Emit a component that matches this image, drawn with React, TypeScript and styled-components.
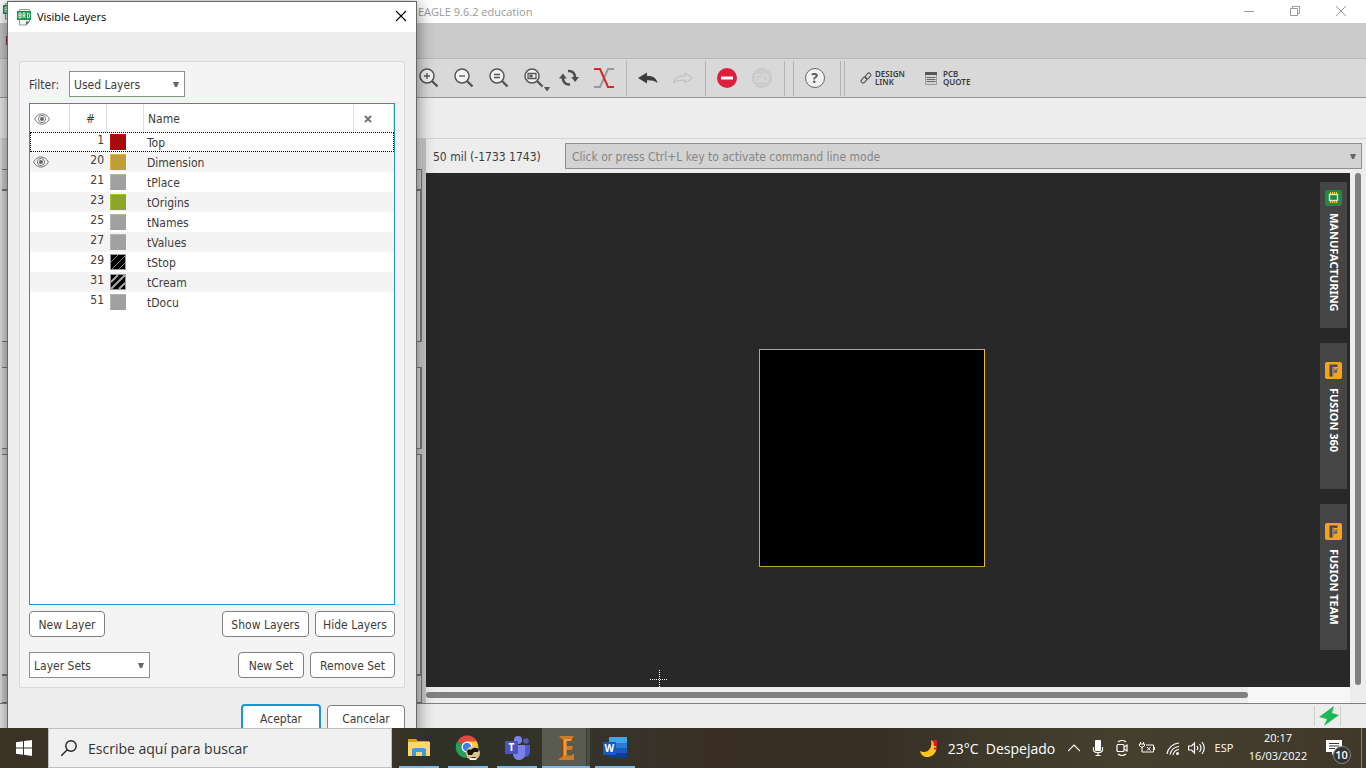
import React from 'react';
import styled, { createGlobalStyle, css } from 'styled-components';

const uiFont = '"DejaVu Sans Condensed", "DejaVu Sans", sans-serif';
const labelFont = '"Noto Sans", "Open Sans", sans-serif';
const shellFont = '"Open Sans", "Noto Sans", sans-serif';

const GlobalStyle = createGlobalStyle`
  *, *::before, *::after { box-sizing: border-box; }
  body { margin: 0; background: #ededed; }
  button, input, select { font: inherit; color: inherit; margin: 0; }
  svg { display: block; flex: none; }
`;

/* ---------- Desktop ---------- */

const Desktop = styled.div`
  display: flex;
  flex-direction: column;
  height: 100vh;
  overflow: hidden;
  font: 12px/16px ${uiFont};
  color: #3c3c3c;
`;

const Workspace = styled.main`
  position: relative;
  flex: 1;
  min-height: 0;
  display: flex;
  flex-direction: column;
  overflow: hidden;
`;

/* ---------- Main window ---------- */

const TitleBar = styled.header`
  display: flex;
  align-items: center;
  height: 23px;
  padding: 0 2px 0 3px;
  background: #fff;
  color: #999;
  font-family: ${shellFont};
`;

const WindowTitle = styled.span`
  flex: 1;
  margin-left: 401px;
  font-size: 11px;
`;

const CaptionButton = styled.button`
  display: flex;
  align-items: center;
  justify-content: center;
  width: 46px;
  height: 22px;
  padding: 0 0 2px;
  border: 0;
  background: none;
`;

const MenuBar = styled.nav`
  display: flex;
  align-items: center;
  height: 36px;
  padding-left: 5px;
  background: #cbcbcb;
  border-bottom: 1px solid #b9b9b9;
`;

const MenuItem = styled.button`
  padding: 0;
  border: 0;
  background: none;
  color: #7a2020;
`;

const Toolbar = styled.div`
  display: flex;
  align-items: center;
  height: 39px;
  padding-left: 411px;
  background: #d9d9d9;
  border-bottom: 1px solid #999;
`;

const ToolButton = styled.button`
  display: flex;
  align-items: center;
  justify-content: center;
  width: 35px;
  height: 36px;
  padding: 0;
  border: 0;
  background: none;
`;

const ToolDivider = styled.span<{ $before?: number; $after?: number }>`
  width: 1px;
  height: 35px;
  margin: 0 ${p => p.$after ?? 4}px 0 ${p => p.$before ?? 5}px;
  background: #b3b3b3;
`;

const ToolLink = styled.a<{ $gap: number }>`
  display: flex;
  align-items: center;
  gap: ${p => p.$gap}px;
  margin-left: 15px;
  width: 50px;
  color: #3a3a3a;
  font: 600 8px/8px ${labelFont};
  text-decoration: none;
  white-space: nowrap;
`;

const ParameterBar = styled.div`
  height: 41px;
  background: #ededed;
  border-bottom: 1px solid #d3d3d3;
`;

const Body = styled.div`
  flex: 1;
  min-height: 0;
  display: flex;
`;

const Dock = styled.aside`
  flex: none;
  display: flex;
  flex-direction: column;
  width: 426px;
  padding-top: 30px;
  background: #d6d6d6;
  border-left: 2px solid #e2e2e2;
  border-right: 4px solid #c8c8c8;
`;

const DockHeader = styled.div<{ $h: number; $framed?: boolean }>`
  flex: none;
  height: ${p => p.$h}px;
  background: #d2d0ce;
  ${p => p.$framed && css`border: 1px solid #777; border-left: 0;`}
`;

const DockList = styled.div<{ $h?: number }>`
  ${p => (p.$h ? css`flex: none; height: ${p.$h}px;` : css`flex: 1;`)}
  background: #dcdedc;
  border: 1px solid #777c84;
  border-width: 1px 2px 1px 0;
`;

const Editor = styled.section`
  flex: 1;
  min-width: 0;
  display: flex;
  flex-direction: column;
`;

const CommandRow = styled.div`
  display: flex;
  align-items: center;
  height: 34px;
  padding: 0 4px 0 7px;
  background: #ededed;
`;

const Coordinates = styled.output`
  width: 132px;
  padding-top: 2px;
  white-space: nowrap;
`;

const ComboFrame = styled.div<{ $w?: number; $disabled?: boolean }>`
  display: flex;
  align-items: center;
  height: 26px;
  ${p => (p.$w ? css`width: ${p.$w}px;` : css`flex: 1;`)}
  padding-right: 5px;
  background: ${p => (p.$disabled ? '#d3d3d3' : '#fff')};
  border: 1px solid #8f8f8f;
  color: ${p => (p.$disabled ? '#858585' : 'inherit')};
`;

const comboText = css`
  flex: 1;
  min-width: 0;
  height: 24px;
  padding: 2px 4px 0;
  border: 0;
  outline: 0;
  background: transparent;
  appearance: none;
`;

const ComboSelect = styled.select`${comboText}`;

const ComboInput = styled.input`
  ${comboText}
  padding-left: 6px;
  &::placeholder { color: #858585; opacity: 1; }
`;

const CanvasRow = styled.div`
  flex: 1;
  min-height: 0;
  display: flex;
`;

const Canvas = styled.div`
  position: relative;
  flex: 1;
  display: flex;
  justify-content: flex-end;
  padding: 9px 3px;
  background: #282828;
`;

const Board = styled.div`
  position: absolute;
  left: 333px;
  top: 176px;
  width: 226px;
  height: 218px;
  background: #000;
  border: 1px solid #a6a6a6;
  border-right-color: #e0c322;
  border-bottom-color: #c3a02c;
`;

const Crosshair = styled.svg`
  position: absolute;
  left: 224px;
  top: 497px;
`;

const SideTabs = styled.nav`
  display: flex;
  flex-direction: column;
  gap: 15px;
`;

const SideTab = styled.button<{ $top: number; $gap: number }>`
  display: flex;
  flex-direction: column;
  align-items: center;
  gap: ${p => p.$gap}px;
  width: 27px;
  height: 146px;
  padding: ${p => p.$top}px 0 0;
  border: 0;
  background: #454545;
  color: #fff;
  font: 700 11px/16px ${labelFont};
`;

const SideLabel = styled.span`
  writing-mode: vertical-rl;
  white-space: nowrap;
`;

const VerticalScroll = styled.div`
  width: 16px;
  padding: 0 5px 2px;
  background: #ededed;
`;

const HorizontalScroll = styled.div`
  display: flex;
  align-items: center;
  height: 16px;
  padding-right: 16px;
  background: #ededed;
`;

const ScrollThumb = styled.div<{ $vertical?: boolean }>`
  background: #808080;
  border-radius: 3px;
  ${p => (p.$vertical ? css`height: 100%;` : css`flex: 1; height: 6px;`)}
`;

const ScrollTrack = styled.div`
  width: 102px;
  height: 16px;
  background: #f6f6f6;
`;

const StatusBar = styled.footer`
  display: flex;
  justify-content: flex-end;
  align-items: center;
  height: 25px;
  padding-right: 25px;
  background: #ededed;
  border-top: 1px solid #808080;
`;

const StatusCell = styled.div`
  display: flex;
  padding: 0 1px 0 4px;
  border: solid #d0d0d0;
  border-width: 0 1px;
`;

/* ---------- Dialog ---------- */

const Dialog = styled.section`
  position: absolute;
  left: 7px;
  top: 1px;
  bottom: -16px;
  width: 410px;
  display: flex;
  flex-direction: column;
  background: #ededed;
  border: 1px solid #666;
  box-shadow: 0 2px 16px rgba(0, 0, 0, 0.5);
`;

const DialogTitle = styled.header`
  display: flex;
  align-items: center;
  height: 30px;
  padding: 0 9px 0 9px;
  background: #fff;
  color: #000;
  font: 11px/16px ${shellFont};
  h1 { flex: 1; margin: 0 0 0 6px; font: inherit; }
`;

const CloseButton = styled.button`
  padding: 0 0 2px;
  border: 0;
  background: none;
`;

const Group = styled.div`
  flex: 1;
  min-height: 0;
  display: flex;
  flex-direction: column;
  margin: 29px 11px 16px;
  padding: 9px;
  background: #f4f4f4;
  border: 1px solid #d8d8d8;
  border-radius: 2px;
`;

const Row = styled.div<{ $mt?: number }>`
  display: flex;
  align-items: center;
  gap: 6px;
  margin-top: ${p => p.$mt ?? 0}px;
`;

const FilterLabel = styled.label`
  width: 34px;
  padding-top: 2px;
`;

const Spacer = styled.span`
  flex: 1;
`;

const ListFrame = styled.div`
  flex: 1;
  min-height: 0;
  margin-top: 6px;
  background: #fff;
  border: 1px solid #1a96d2;
`;

const LayerTable = styled.table`
  width: 100%;
  table-layout: fixed;
  border-collapse: separate;
  border-spacing: 0;
`;

const HeadCell = styled.th<{ $w?: number; $indent?: number }>`
  ${p => p.$w && css`width: ${p.$w}px;`}
  height: 28px;
  padding: 1px 0 0 ${p => p.$indent ?? 4}px;
  border-right: 1px solid #dedede;
  font-weight: 400;
  text-align: left;
`;

const LayerRow = styled.tr<{ $focused?: boolean }>`
  &:nth-child(even) { background: #f4f4f4; }
  ${p => p.$focused && css`outline: 1px dotted #000; outline-offset: -1px;`}
`;

const Cell = styled.td`
  height: 20px;
  padding: 0 3px;
`;

const NameCell = styled(Cell)`
  padding-top: 2px;
`;

const NumberCell = styled(Cell)`
  padding: 0 3px 4px 0;
  text-align: right;
`;

const PushButton = styled.button<{ $w: number; $primary?: boolean }>`
  width: ${p => p.$w}px;
  height: ${p => (p.$primary ? 28 : 26)}px;
  padding: 2px 0 0;
  background: #fff;
  border: ${p => (p.$primary ? '2px solid #1a96d2' : '1px solid #808080')};
  border-radius: 4px;
  white-space: nowrap;
`;

const DialogFooter = styled.footer`
  display: flex;
  justify-content: flex-end;
  align-items: center;
  gap: 6px;
  height: 28px;
  margin: 0 11px 11px;
`;

/* ---------- Taskbar ---------- */

const Taskbar = styled.footer`
  flex: none;
  display: flex;
  height: 40px;
  background: linear-gradient(90deg, #3a3224 0, #3a3527 28%, #2f3126 32%, #36342a 45%, #3b2f24 52%, #382f24 64%, #3c392b 72%, #453f2e 82%, #40392b 100%);
  color: #fff;
  font: 11px/18px ${shellFont};
`;

const StartButton = styled.button`
  display: flex;
  align-items: center;
  justify-content: center;
  width: 48px;
  padding: 0;
  border: 0;
  background: none;
`;

const SearchBox = styled.label`
  display: flex;
  align-items: center;
  gap: 11px;
  width: 344px;
  padding-left: 12px;
  background: #f0f0f0;
  border: 1px solid #bdbdbd;
  color: #333;
  font-size: 14px;
  input { flex: 1; min-width: 0; padding: 1px 0 0; border: 0; outline: 0; background: none; }
  input::placeholder { color: #333; opacity: 1; }
`;

const Apps = styled.div`
  display: flex;
  gap: 1px;
  padding-left: 3px;
`;

const AppButton = styled.button<{ $active?: boolean }>`
  display: flex;
  align-items: center;
  justify-content: center;
  width: 48px;
  padding: 0;
  border: 0;
  background: linear-gradient(#76b9ed, #76b9ed) center bottom / 40px 2px no-repeat;
  ${p => p.$active && css`
    background:
      linear-gradient(#76b9ed, #76b9ed) center bottom / 100% 2px no-repeat,
      linear-gradient(90deg, #595a50 44px, #3a3b32 44px, #3a3b32 45px, #4b4c43 45px);
  `}
`;

const Tray = styled.div`
  flex: 1;
  display: flex;
  justify-content: flex-end;
  align-items: center;
`;

const TrayButton = styled.button<{ $w: number }>`
  display: flex;
  align-items: center;
  justify-content: center;
  width: ${p => p.$w}px;
  height: 40px;
  padding: 0;
  border: 0;
  background: none;
  white-space: nowrap;
`;

const WeatherButton = styled(TrayButton)`
  gap: 9px;
  padding: 2px 4px 0 0;
  font-size: 14px;
`;

const Clock = styled.time`
  width: 76px;
  padding-bottom: 2px;
  text-align: center;
`;

const ShowDesktop = styled.button`
  width: 5px;
  padding: 0;
  align-self: stretch;
  border: 0;
  border-left: 1px solid #86826f;
  background: none;
`;

/* ---------- Icons ---------- */

const BoardIcon = () => (
  <svg width="14" height="17" viewBox="0 0 14 17">
    <path d="M2.500 .5h10v12l-3.500 3.500h-6.500z" fill="#f4f4f4" stroke="#999" />
    <path d="M9 12.500h4L9 16.500z" fill="#666" />
    <rect x="0" y="2" width="14" height="9" fill="#1f9149" />
    <path d="M2 4v5h2v-5zM2 6.500h2M6 9V4h2v2.500H6M7 6.500l1.500 2.500M10.500 4v5h1l1-1V5l-1-1z" fill="none" stroke="#d8f3df" />
  </svg>
);

const Triangle = () => (
  <svg width="6" height="5" viewBox="0 0 6 5"><path d="M0 0h6L4 5H2z" fill="#666" /></svg>
);

const Magnifier = ({ children, menu }: { children?: React.ReactNode; menu?: boolean }) => (
  <svg width="20" height="20" viewBox="0 0 20 20" fill="none" stroke="#555" overflow="visible">
    <path d="M13 13l5.500 5.500" strokeWidth="2.400" />
    <circle cx="8" cy="8" r="7" fill="#f2f2f2" strokeWidth="1.500" />
    {children}
    {menu && <path d="M20 19h6l-2.500 4h-1z" fill="#555" stroke="none" />}
  </svg>
);

const RefreshIcon = () => (
  <svg width="20" height="20" viewBox="0 0 20 20">
    <g fill="none" stroke="#4d4d4d" strokeWidth="2.600">
      <path d="M9 3c4.500-.5 7.200 2.500 7.200 7" />
      <path d="M11 16.500c-4.500.5-7.200-2.500-7.200-7" />
    </g>
    <path d="M12.200 9h7.800l-3.900 5zM0 10.500h7.800L3.900 5.500z" fill="#4d4d4d" />
  </svg>
);

const RatsnestIcon = () => (
  <svg width="20" height="20" viewBox="0 0 20 20" fill="none" strokeWidth="2">
    <path d="M0 19h6L14 1h6" stroke="#999" />
    <path d="M0 1h6l8 18h6" stroke="#d9252a" />
  </svg>
);

const UndoIcon = () => (
  <svg width="20" height="20" viewBox="0 0 20 20">
    <path d="M0 10l9-5.500V8C14 7.800 18.500 9.500 19.500 15c-3-2.500-6.500-3-10.500-2.800V15.500z" fill="#3d3d3d" />
  </svg>
);

const RedoIcon = () => (
  <svg width="20" height="20" viewBox="0 0 20 20">
    <path d="M19.500 10L12 5v3C6 7.800 1.500 9.500.5 15c3-2.500 6.500-3 11.500-2.800V15z" fill="none" stroke="#bcbcbc" />
  </svg>
);

const StopIcon = () => (
  <svg width="20" height="20" viewBox="0 0 20 20">
    <circle cx="10" cy="10" r="10" fill="#dd1f3d" /><rect x="4" y="8.500" width="12" height="3" fill="#fff" />
  </svg>
);

const GoBadge = styled.span`
  width: 20px;
  height: 20px;
  border: 1px solid #c6c6c6;
  border-radius: 50%;
  background: #cdcdcd;
  color: #dfdfdf;
  font: 10px/18px ${labelFont};
`;

const HelpBadge = styled.span`
  width: 20px;
  height: 20px;
  border: 1px solid #666;
  border-radius: 50%;
  background: #f2f2f2;
  color: #5a5a5a;
  font: 700 14px/18px ${labelFont};
`;

const ChainIcon = () => (
  <svg width="12" height="12" viewBox="0 0 12 12" fill="none" stroke="#555" strokeWidth="1.100">
    <rect x="-3.300" y="-1.900" width="6.600" height="3.800" rx="1.900" transform="translate(4 8) rotate(-48)" />
    <rect x="-3.300" y="-1.900" width="6.600" height="3.800" rx="1.900" transform="translate(8 4) rotate(-48)" />
  </svg>
);

const QuoteIcon = () => (
  <svg width="12" height="13" viewBox="0 0 12 13">
    <path d="M.5 .5h11v12H.5z" fill="#d4d4d4" stroke="#999" /><path d="M0 0h12v3H0z" fill="#555" />
    <path d="M1.500 5.500h9M1.500 7.500h9M1.500 9.500h9" stroke="#666" />
  </svg>
);

const EyeIcon = () => (
  <svg width="16" height="12" viewBox="0 0 16 12" fill="none" stroke="#777">
    <path d="M.6 6C4-.8 12-.8 15.400 6 12 12.800 4 12.800.6 6z" />
    <circle cx="8" cy="6" r="3.600" /><circle cx="8" cy="6" r="2" fill="#666" stroke="none" />
  </svg>
);

const CrossIcon = () => (
  <svg width="8" height="8" viewBox="0 0 8 8"><path d="M1 1l6 6M7 1L1 7" stroke="#777" strokeWidth="2" /></svg>
);

const Swatch = ({ fill, edge, hatch }: { fill: string; edge: string; hatch?: number }) => (
  <svg width="16" height="16" viewBox="0 0 16 16">
    <rect width="16" height="16" fill={edge} />
    <rect x="1" y="1" width={hatch ? 14 : 15} height={hatch ? 14 : 15} fill={fill} />
    {hatch === 1 && <path d="M1 8l7-7M2 15L15 2M9 15l6-6" stroke="#aaa" strokeWidth=".8" />}
    {hatch === 2 && <path d="M1 8l7-7M1 15L15 1M9 15l6-6" stroke="#aaa" strokeWidth="2" />}
  </svg>
);

const ChipIcon = () => (
  <svg width="17" height="16" viewBox="0 0 17 16">
    <rect width="17" height="16" rx="2" fill="#1f8a43" />
    <path d="M5.500 2v11M7.500 2v11M9.500 2v11M11.500 2v11" stroke="#f1d21c" />
    <rect x="4.500" y="4.500" width="8" height="6" fill="#1f8a43" stroke="#d8e8d0" strokeWidth="1.400" />
  </svg>
);

const FusionIcon = () => (
  <svg width="17" height="17" viewBox="0 0 17 17">
    <rect width="17" height="17" rx="2" fill="#f5a21c" />
    <path d="M4.500 2.500h8v2.500H8v3h4v2.500H8v4H4.500z" fill="#4a4640" />
    <path d="M7 5v9l2-2V9.500l4-1V6L9 7V4z" fill="#85807a" />
  </svg>
);

const BoltIcon = () => (
  <svg width="20" height="20" viewBox="0 0 20 20"><path d="M15 0L0 11l8 2-3 7 15-11-7-2z" fill="#1db954" /></svg>
);

const FolderIcon = () => (
  <svg width="22" height="20" viewBox="0 0 22 20">
    <path d="M0 1h8l2 2h11v4H0z" fill="#e0a012" /><path d="M0 4h22v14H0z" fill="#fdd767" />
    <path d="M4 18v-7l2-1h10l2 1v7h-4v-4H8v4z" fill="#3f9ae0" />
  </svg>
);

const ChromeIcon = () => (
  <svg width="26" height="26" viewBox="0 0 26 26">
    <path d="M12 12L2.500 6.500A11 11 0 0 1 22 6.500z" fill="#e14b3d" />
    <path d="M12 12L2.200 6.500A11 11 0 0 0 11 23l5-9z" fill="#23a05a" />
    <path d="M12 12V6.500h9.800A11 11 0 0 1 11.500 23l5-9z" fill="#f8c92d" />
    <circle cx="12" cy="12" r="5.500" fill="#fff" /><circle cx="12" cy="12" r="4.300" fill="#3f7ee8" />
    <circle cx="18" cy="18" r="7" fill="#d9c391" />
    <path d="M12 16c2-3 3 0 5-2s4-1 7 0l-1 3h-4l-2 3h-4zM14 22h8l-3 1z" fill="#1a1510" />
    <path d="M13.500 23.500h9l-2 1.500h-5z" fill="#fff" />
  </svg>
);

const IconLetter = styled.text`
  fill: #fff;
  font: 700 10px ${labelFont};
`;

const TeamsIcon = () => (
  <svg width="25" height="24" viewBox="0 0 25 24">
    <circle cx="13" cy="4" r="4" fill="#7b83eb" /><circle cx="21" cy="5" r="2.800" fill="#5059c9" />
    <path d="M16 9h9v7a5 5 0 0 1-8 4z" fill="#5059c9" /><path d="M8 9h12v8a6 6 0 0 1-12 2z" fill="#7b83eb" />
    <rect y="5" width="13" height="13" rx="1" fill="#4b53bc" />
    <IconLetter x="3.500" y="15">T</IconLetter>
  </svg>
);

const EagleIcon = () => (
  <svg width="17" height="24" viewBox="0 0 17 24">
    <path d="M1 0h15v6l-3-1H8.500v5H15l-1 4H8.500v5.500H13l3-2V24H0l3-4V4z" fill="#cf7a26" />
    <path d="M1 0l4 4v16l-5 4 3-4V4zM16 0v6l-3-1.500z" fill="#8b4610" />
    <path d="M8.500 5H13l1-2H6v17l2.500-1z" fill="#e89a42" />
  </svg>
);

const WordIcon = () => (
  <svg width="25" height="22" viewBox="0 0 25 22">
    <path d="M6 0h18v6H6z" fill="#41a5ee" /><path d="M6 6h18v5H6z" fill="#2b7cd3" />
    <path d="M6 11h18v5H6z" fill="#185abd" /><path d="M6 16h18v5H6z" fill="#103f91" />
    <rect y="5" width="13" height="13" rx="1" fill="#185abd" />
    <IconLetter x="1.500" y="15">W</IconLetter>
  </svg>
);

const WindowsIcon = () => (
  <svg width="16" height="16" viewBox="0 0 16 16" fill="#fff">
    <path d="M0 2.200L7 1.200V7.500H0zM8 1l8-1v7.500H8zM0 8.500h7v6.300L0 13.800zM8 8.500h8V16l-8-1.200z" />
  </svg>
);

const SearchIcon = () => (
  <svg width="16" height="16" viewBox="0 0 16 16" fill="none" stroke="#222" strokeWidth="1.400">
    <circle cx="10" cy="6" r="5.200" /><path d="M6.300 9.800L0 16" />
  </svg>
);

const MoonIcon = () => (
  <svg width="20" height="20" viewBox="0 0 20 20">
    <path d="M12 1c7 4 7 11 2 15S2 18 1 12c6 3 13-1 11-11z" fill="#fbc51c" />
    <path d="M14 1h4v6h-3z" fill="#d51c2c" /><path d="M15 8.500h3v2h-3z" fill="#d51c2c" />
  </svg>
);

const TrayIcon = ({ w = 16, children }: { w?: number; children: React.ReactNode }) => (
  <svg width={w} height="16" viewBox={`0 0 ${w} 16`} fill="none" stroke="#fff" strokeWidth="1.200">{children}</svg>
);

const NoticeWrap = styled.span`
  position: relative;
  width: 26px;
  height: 16px;
`;

const NoticeCount = styled.span`
  position: absolute;
  left: 7px;
  top: 6px;
  width: 18px;
  height: 18px;
  border: 1px solid #888;
  border-radius: 50%;
  background: #333;
  font: 600 11px/16px ${shellFont};
`;

/* ---------- Data ---------- */

const layers = [
  { id: 1, name: 'Top', fill: '#a30c0c', edge: '#c01010' },
  { id: 20, name: 'Dimension', fill: '#be9e37', edge: '#e0b840', visible: true },
  { id: 21, name: 'tPlace', fill: '#a0a0a0', edge: '#b4b4b4' },
  { id: 23, name: 'tOrigins', fill: '#8da52a', edge: '#a4c42c' },
  { id: 25, name: 'tNames', fill: '#a0a0a0', edge: '#b4b4b4' },
  { id: 27, name: 'tValues', fill: '#a0a0a0', edge: '#b4b4b4' },
  { id: 29, name: 'tStop', fill: '#000', edge: '#999', hatch: 1 },
  { id: 31, name: 'tCream', fill: '#000', edge: '#999', hatch: 2 },
  { id: 51, name: 'tDocu', fill: '#a0a0a0', edge: '#b4b4b4' },
];

const LayersDialog = () => (
  <Dialog role="dialog" aria-labelledby="layers-title">
    <DialogTitle>
      <BoardIcon />
      <h1 id="layers-title">Visible Layers</h1>
      <CloseButton aria-label="Close">
        <svg width="12" height="12" viewBox="0 0 12 12"><path d="M1 1l10 10M11 1L1 11" stroke="#000" strokeWidth="1.100" /></svg>
      </CloseButton>
    </DialogTitle>
    <Group>
      <Row>
        <FilterLabel htmlFor="filter">Filter:</FilterLabel>
        <ComboFrame $w={116}>
          <ComboSelect id="filter"><option>Used Layers</option></ComboSelect>
          <Triangle />
        </ComboFrame>
      </Row>
      <ListFrame>
        <LayerTable>
          <thead>
            <tr>
              <HeadCell $w={40} aria-label="Visible"><EyeIcon /></HeadCell>
              <HeadCell $w={37} $indent={16}>#</HeadCell>
              <HeadCell $w={37} aria-label="Color" />
              <HeadCell>Name</HeadCell>
              <HeadCell $w={40} $indent={10} aria-label="Remove"><CrossIcon /></HeadCell>
            </tr>
          </thead>
          <tbody>
            {layers.map((l, i) => (
              <LayerRow key={l.id} $focused={i === 0}>
                <Cell>{l.visible && <EyeIcon />}</Cell>
                <NumberCell>{l.id}</NumberCell>
                <Cell><Swatch fill={l.fill} edge={l.edge} hatch={l.hatch} /></Cell>
                <NameCell>{l.name}</NameCell>
                <Cell />
              </LayerRow>
            ))}
          </tbody>
        </LayerTable>
      </ListFrame>
      <Row $mt={6}>
        <PushButton $w={76}>New Layer</PushButton>
        <Spacer />
        <PushButton $w={87}>Show Layers</PushButton>
        <PushButton $w={80}>Hide Layers</PushButton>
      </Row>
      <Row $mt={15}>
        <ComboFrame $w={121}>
          <ComboSelect aria-label="Layer Sets"><option>Layer Sets</option></ComboSelect>
          <Triangle />
        </ComboFrame>
        <Spacer />
        <PushButton $w={66}>New Set</PushButton>
        <PushButton $w={85}>Remove Set</PushButton>
      </Row>
    </Group>
    <DialogFooter>
      <PushButton $w={80} $primary>Aceptar</PushButton>
      <PushButton $w={78}>Cancelar</PushButton>
    </DialogFooter>
  </Dialog>
);

export default function App() {
  return (
    <Desktop>
      <GlobalStyle />
      <Workspace>
        <TitleBar>
          <BoardIcon />
          <WindowTitle>EAGLE 9.6.2 education</WindowTitle>
          <CaptionButton aria-label="Minimize">
            <svg width="10" height="10" viewBox="0 0 10 10"><path d="M0 5.500h10" stroke="#999" /></svg>
          </CaptionButton>
          <CaptionButton aria-label="Restore">
            <svg width="10" height="10" viewBox="0 0 10 10" fill="none" stroke="#999"><path d="M.5 2.500h7v7h-7zM2.500 2V.5h7v7H8" /></svg>
          </CaptionButton>
          <CaptionButton aria-label="Close">
            <svg width="10" height="10" viewBox="0 0 10 10"><path d="M0 0l10 10M10 0L0 10" stroke="#999" /></svg>
          </CaptionButton>
        </TitleBar>
        <MenuBar><MenuItem>F</MenuItem></MenuBar>
        <Toolbar role="toolbar">
          <ToolButton aria-label="Zoom in"><Magnifier><path d="M5 8h6M8 5v6" strokeWidth="1.300" /></Magnifier></ToolButton>
          <ToolButton aria-label="Zoom out"><Magnifier><path d="M5 8h6" strokeWidth="1.300" /></Magnifier></ToolButton>
          <ToolButton aria-label="Zoom redraw"><Magnifier><path d="M5 6.500h6M5 9.500h6" strokeWidth="1.300" /></Magnifier></ToolButton>
          <ToolButton aria-label="Zoom select"><Magnifier menu><path d="M4 5.500h8v5H4zM6 7.500h2v1H6z" strokeWidth="1.300" /></Magnifier></ToolButton>
          <ToolButton aria-label="Refresh"><RefreshIcon /></ToolButton>
          <ToolButton aria-label="Ratsnest"><RatsnestIcon /></ToolButton>
          <ToolDivider $after={3} />
          <ToolButton aria-label="Undo"><UndoIcon /></ToolButton>
          <ToolButton aria-label="Redo" disabled><RedoIcon /></ToolButton>
          <ToolDivider $after={3} />
          <ToolButton aria-label="Stop"><StopIcon /></ToolButton>
          <ToolButton disabled><GoBadge>GO</GoBadge></ToolButton>
          <ToolDivider />
          <ToolDivider $before={4} $after={3} />
          <ToolButton><HelpBadge>?</HelpBadge></ToolButton>
          <ToolDivider $before={8} $after={3} />
          <ToolDivider $before={0} $after={0} />
          <ToolLink href="#design-link" $gap={3}><ChainIcon /><span>DESIGN<br />LINK</span></ToolLink>
          <ToolLink href="#pcb-quote" $gap={6}><QuoteIcon /><span>PCB<br />QUOTE</span></ToolLink>
        </Toolbar>
        <ParameterBar />
        <Body>
          <Dock>
            <DockHeader $h={21} $framed />
            <DockList $h={152} />
            <DockHeader $h={25} />
            <DockList $h={82} />
            <DockHeader $h={5} />
            <DockList />
            <DockHeader $h={28} $framed />
          </Dock>
          <Editor>
            <CommandRow>
              <Coordinates>50 mil (-1733 1743)</Coordinates>
              <ComboFrame $disabled>
                <ComboInput aria-label="Command line" placeholder="Click or press Ctrl+L key to activate command line mode" />
                <Triangle />
              </ComboFrame>
            </CommandRow>
            <CanvasRow>
              <Canvas>
                <Board />
                <Crosshair width="18" height="18" viewBox="0 0 18 18" stroke="#fff" strokeDasharray="1 1">
                  <path d="M0 9.500h18M9.500 0v18" />
                </Crosshair>
                <SideTabs>
                  <SideTab $top={8} $gap={7}><ChipIcon /><SideLabel>MANUFACTURING</SideLabel></SideTab>
                  <SideTab $top={19} $gap={9}><FusionIcon /><SideLabel>FUSION 360</SideLabel></SideTab>
                  <SideTab $top={19} $gap={9}><FusionIcon /><SideLabel>FUSION TEAM</SideLabel></SideTab>
                </SideTabs>
              </Canvas>
              <VerticalScroll><ScrollThumb $vertical /></VerticalScroll>
            </CanvasRow>
            <HorizontalScroll><ScrollThumb /><ScrollTrack /></HorizontalScroll>
          </Editor>
        </Body>
        <StatusBar><StatusCell><BoltIcon /></StatusCell></StatusBar>
        <LayersDialog />
      </Workspace>
      <Taskbar>
        <StartButton aria-label="Start"><WindowsIcon /></StartButton>
        <SearchBox>
          <SearchIcon />
          <input aria-label="Search" placeholder="Escribe aquí para buscar" />
        </SearchBox>
        <Apps>
          <AppButton aria-label="File Explorer"><FolderIcon /></AppButton>
          <AppButton aria-label="Chrome"><ChromeIcon /></AppButton>
          <AppButton aria-label="Teams"><TeamsIcon /></AppButton>
          <AppButton aria-label="Eagle" $active><EagleIcon /></AppButton>
          <AppButton aria-label="Word"><WordIcon /></AppButton>
        </Apps>
        <Tray>
          <WeatherButton $w={146}><MoonIcon /><span>23°C&nbsp; Despejado</span></WeatherButton>
          <TrayButton $w={24} aria-label="Show hidden icons"><TrayIcon w={12}><path d="M0 11l6-6 6 6" /></TrayIcon></TrayButton>
          <TrayButton $w={24} aria-label="Microphone">
            <TrayIcon w={12}><rect x="3" y="0" width="6" height="11" rx="1" fill="#fff" stroke="none" /><path d="M1.500 7v3q0 2.500 4.500 2.500T10.500 10V7M6 12.500V16M3.500 15.500h5" /></TrayIcon>
          </TrayButton>
          <TrayButton $w={24} aria-label="Meet now">
            <TrayIcon w={12}><rect x="1" y="4.500" width="7" height="7" rx="1" /><path d="M8 7l3-2v6L8 9M2 2q4-3 8 0M2 14q4 3 8 0" /></TrayIcon>
          </TrayButton>
          <TrayButton $w={26} aria-label="Battery">
            <TrayIcon w={16}><path d="M1.500 2v2M4.500 2v2M.5 4h5v2q-2.500 2.500-5 0zM3 7v5h11.500V5H7M8 7l3.500 3.500M11.500 7L8 10.500" strokeWidth="1" /><path d="M15.500 7v3" /></TrayIcon>
          </TrayButton>
          <TrayButton $w={24} aria-label="Network">
            <TrayIcon w={13}><path d="M1 14A13 13 0 0 1 13 3M4 14.500A10 10 0 0 1 13 6.500M7 15a7 7 0 0 1 6-5.500" /><circle cx="11.500" cy="13.500" r="1.500" fill="#fff" stroke="none" /></TrayIcon>
          </TrayButton>
          <TrayButton $w={24} aria-label="Volume">
            <TrayIcon w={17}><path d="M.5 6h3l3-3v10l-3-3h-3zM9 6q1.500 2 0 4M11.500 4q3 4 0 8M14 2q4.500 6 0 12" /></TrayIcon>
          </TrayButton>
          <TrayButton $w={32}>ESP</TrayButton>
          <Clock>20:17<br />16/03/2022</Clock>
          <TrayButton $w={45} aria-label="Notifications, 10 new">
            <NoticeWrap>
              <svg width="16" height="16" viewBox="0 0 16 16"><path d="M0 0h16v12H9l-3 3v-3H0z" fill="#fff" /><path d="M3 3.500h10M3 6h10M3 8.500h6" stroke="#333" /></svg>
              <NoticeCount>10</NoticeCount>
            </NoticeWrap>
          </TrayButton>
          <ShowDesktop aria-label="Show desktop" />
        </Tray>
      </Taskbar>
    </Desktop>
  );
}
